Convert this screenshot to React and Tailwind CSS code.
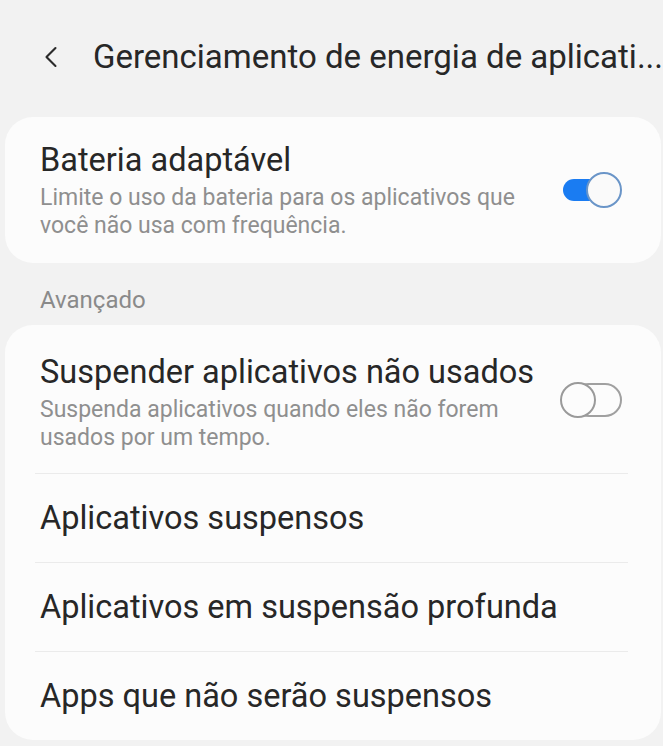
import { ChevronLeft } from "lucide-react";

function Toggle({ on }) {
  if (on) {
    return (
      <div className="relative w-[60px] h-[38px] shrink-0">
        <div className="absolute left-[1px] top-[8px] w-[46px] h-[22px] rounded-full bg-[#1a7cf2]" />
        <div className="absolute right-0 top-[1px] w-[36px] h-[36px] rounded-full bg-[#fafafa] border-2 border-[#6a95c8]" />
      </div>
    );
  }
  return (
    <div className="relative w-[62px] h-[38px] shrink-0 -mt-[4px]">
      <div className="absolute right-0 top-[2px] w-[50px] h-[34px] rounded-full border-2 border-[#a0a0a0]" />
      <div className="absolute left-0 top-[1px] w-[36px] h-[36px] rounded-full bg-[#fcfcfc] border-2 border-[#9a9a9a]" />
    </div>
  );
}

function SwitchRow({ title, sub, on }) {
  return (
    <div className="flex items-center justify-between pl-[35px] pr-[39px]">
      <div>
        <div className="text-[32.5px] leading-[40px] text-[#272727]">{title}</div>
        <div className="mt-[4px] text-[23px] leading-[28px] text-[#8f8f8f] max-w-[484px]">
          {sub}
        </div>
      </div>
      <Toggle on={on} />
    </div>
  );
}

function LinkRow({ label }) {
  return (
    <div className="pl-[30px] pr-[33px]">
      <div className="h-px bg-[#ebebeb]" />
      <div className="h-[88px] flex items-center px-[5px] text-[32.5px] text-[#272727]">
        {label}
      </div>
    </div>
  );
}

export default function App() {
  return (
    <div className="w-[663px] h-[746px] overflow-hidden bg-[#f2f2f2] font-['Roboto',sans-serif]">
      <div className="h-[117px] flex items-center pb-[4px]">
        <ChevronLeft className="ml-[33px] w-[36px] h-[36px] text-[#2b2b2b]" strokeWidth={1.4} />
        <div className="ml-[24px] text-[33px] text-[#272727] whitespace-nowrap">
          Gerenciamento de energia de aplicati...
        </div>
      </div>

      <div className="ml-[5px] w-[656px] rounded-[28px] bg-[#fcfcfc] pt-[23px] pb-[23px]">
        <SwitchRow
          title="Bateria adaptável"
          sub="Limite o uso da bateria para os aplicativos que você não usa com frequência."
          on
        />
      </div>

      <div className="pl-[40px] pt-[23px] pb-[11px] text-[24px] leading-[28px] text-[#8a8a8a]">
        Avançado
      </div>

      <div className="ml-[5px] w-[656px] rounded-[28px] bg-[#fcfcfc]">
        <div className="pt-[27px] pb-[21px]">
          <SwitchRow
            title="Suspender aplicativos não usados"
            sub="Suspenda aplicativos quando eles não forem usados por um tempo."
          />
        </div>
        <LinkRow label="Aplicativos suspensos" />
        <LinkRow label="Aplicativos em suspensão profunda" />
        <LinkRow label="Apps que não serão suspensos" />
      </div>
    </div>
  );
}
